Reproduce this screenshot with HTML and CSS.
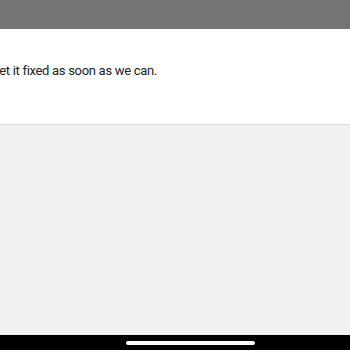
FILE: index.html
```html
<!DOCTYPE html>
<html>
<head>
<meta charset="utf-8">
<link rel="stylesheet" href="styles.css">
</head>
<body>
<div class="screen">
  <header class="topbar"></header>
  <section class="message">
    <div class="message-line">
      <p class="message-text">We'll get it fixed as soon as we can.</p>
    </div>
  </section>
  <main class="filler"></main>
  <footer class="navbar"><span class="handle"></span></footer>
</div>
</body>
</html>
```

FILE: styles.css
```css
html, body {
  margin: 0;
  padding: 0;
  width: 350px;
  height: 350px;
  overflow: hidden;
}
.screen {
  display: flex;
  flex-direction: column;
  height: 350px;
  font-family: Roboto, "Liberation Sans", sans-serif;
}
.topbar {
  height: 29px;
  background: #757575;
  flex: none;
}
.message {
  flex: none;
  height: 95px;
  background: #ffffff;
  border-bottom: 1px solid #dedede;
  overflow: hidden;
}
.message-line {
  width: 157px;
  margin-top: 32px;
  display: flex;
  justify-content: flex-end;
}
.message-text {
  flex: none;
  margin: 0;
  font-size: 13px;
  letter-spacing: -0.3px;
  line-height: 20px;
  color: #222222;
  white-space: nowrap;
}
.filler {
  flex: 1;
  background: #f1f1f1;
}
.navbar {
  flex: none;
  height: 15px;
  background: #000000;
  display: flex;
  align-items: flex-start;
}
.handle {
  width: 129px;
  height: 4px;
  margin-top: 6px;
  margin-left: 126px;
  border-radius: 2px;
  background: #ffffff;
}
```
